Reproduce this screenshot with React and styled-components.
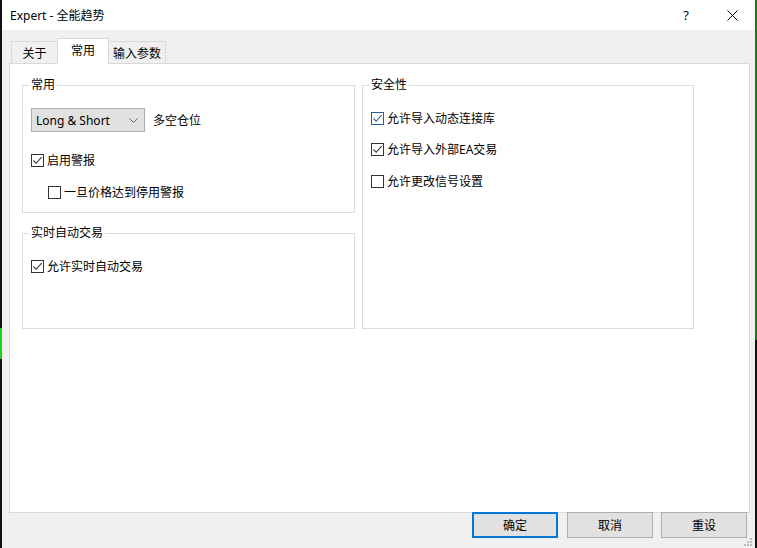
import styled, { createGlobalStyle } from "styled-components";

const GlobalStyle = createGlobalStyle`
  body {
    margin: 0;
    background: #000;
    font-family: "Noto Sans", "Noto Sans CJK SC", sans-serif;
    font-size: 12px;
    color: #000;
  }
`;

const Screen = styled.div`
  display: flex;
  width: 757px;
  height: 548px;
  overflow: hidden;
`;

const Strip = styled.div`
  width: 2px;
  flex: none;
  background: ${(p) => p.$bg};
`;

const Dialog = styled.div`
  width: 753px;
  display: flex;
  flex-direction: column;
  background: #f0f0f0;
`;

const TitleBar = styled.div`
  height: 30px;
  flex: none;
  background: #fff;
  display: flex;
  align-items: center;
  padding-left: 8px;
`;

const Title = styled.div`
  flex: 1;
  font-size: 12px;
`;

const TitleButton = styled.div`
  width: 46px;
  height: 30px;
  display: flex;
  align-items: center;
  justify-content: center;
  font-size: 13px;
`;

const Body = styled.div`
  position: relative;
  flex: 1;
  display: flex;
  flex-direction: column;
  padding: 8px 5px 0 7px;
`;

const TabBar = styled.div`
  height: 25px;
  display: flex;
  align-items: flex-end;
  padding-left: 2px;
`;

const Tab = styled.div`
  position: relative;
  z-index: ${(p) => (p.$active ? 2 : 1)};
  width: ${(p) => p.$w}px;
  height: ${(p) => (p.$active ? 26 : 22)}px;
  margin-left: -1px;
  margin-bottom: ${(p) => (p.$active ? -1 : 0)}px;
  box-sizing: border-box;
  border: 1px solid #d9d9d9;
  border-bottom: none;
  background: ${(p) => (p.$active ? "#fff" : "#f0f0f0")};
  display: flex;
  align-items: ${(p) => (p.$active ? "flex-start" : "center")};
  padding-top: ${(p) => (p.$active ? 2 : 0)}px;
  justify-content: center;
  &:first-child {
    margin-left: 0;
  }
`;

const Panel = styled.div`
  height: 450px;
  box-sizing: border-box;
  border: 1px solid #d9d9d9;
  background: #fff;
  display: grid;
  grid-template-columns: 333px 332px;
  column-gap: 7px;
  align-items: start;
  padding: 13px 0 0 12px;
`;

const Column = styled.div`
  display: flex;
  flex-direction: column;
  gap: 12px;
`;

const Group = styled.fieldset`
  margin: 0;
  min-width: 0;
  height: ${(p) => p.$h}px;
  box-sizing: border-box;
  border: 1px solid #dcdcdc;
  padding: 0 8px;
`;

const Legend = styled.legend`
  padding: 0 2px;
  margin-left: -2px;
  line-height: 16px;
  font-size: 12px;
`;

const Row = styled.div`
  display: flex;
  align-items: center;
  height: ${(p) => p.$h || 20}px;
  margin-top: ${(p) => p.$top}px;
  padding-left: ${(p) => p.$indent || 0}px;
  gap: ${(p) => p.$gap || 3}px;
`;

const Box = styled.span`
  width: 13px;
  height: 13px;
  box-sizing: border-box;
  border: 1px solid ${(p) => (p.$focus ? "#1f5f99" : "#333")};
  background: #fff;
  display: inline-flex;
  align-items: center;
  justify-content: center;
  flex: none;
`;

const Select = styled.div`
  width: 114px;
  height: 24px;
  box-sizing: border-box;
  border: 1px solid #adadad;
  background: #e1e1e1;
  display: flex;
  align-items: center;
  justify-content: space-between;
  padding: 0 6px 0 4px;
  font-size: 12px;
`;

const Footer = styled.div`
  display: flex;
  justify-content: flex-end;
  gap: 8px;
  margin-top: -1px;
  padding-right: 3px;
`;

const Button = styled.div`
  width: 86px;
  height: 26px;
  box-sizing: border-box;
  border: ${(p) => (p.$default ? "2px solid #0078d7" : "1px solid #adadad")};
  margin-right: ${(p) => (p.$default ? 1 : 0)}px;
  background: #e1e1e1;
  display: flex;
  align-items: center;
  justify-content: center;
  font-size: 12px;
  position: relative;
  z-index: 1;
`;

const Grip = styled.svg`
  position: absolute;
  right: 2px;
  bottom: 1px;
`;

const Check = ({ checked, focus, label, top, indent }) => (
  <Row $top={top} $indent={indent}>
    <Box $focus={focus}>
      {checked && (
        <svg width="11" height="11" viewBox="0 0 11 11">
          <polyline
            points="1.5,5.5 4.2,8.3 9.6,2.2"
            fill="none"
            stroke={focus ? "#2a5f8f" : "#333"}
            strokeWidth="1.1"
          />
        </svg>
      )}
    </Box>
    <span>{label}</span>
  </Row>
);

const App = () => {
  return (
    <>
      <GlobalStyle />
      <Screen>
        <Strip $bg="linear-gradient(#111 0 328px, #19d219 328px 359px, #111 359px)" />
        <Dialog>
          <TitleBar>
            <Title>Expert - 全能趋势</Title>
            <TitleButton>?</TitleButton>
            <TitleButton>
              <svg width="11" height="11" viewBox="0 0 11 11">
                <path d="M0.5 0.5 L10.5 10.5 M10.5 0.5 L0.5 10.5" stroke="#000" strokeWidth="1" />
              </svg>
            </TitleButton>
          </TitleBar>
          <Body>
            <TabBar>
              <Tab $w={47}>关于</Tab>
              <Tab $w={52} $active>
                常用
              </Tab>
              <Tab $w={58}>输入参数</Tab>
            </TabBar>
            <Panel>
              <Column>
                <Group $h={136}>
                  <Legend>常用</Legend>
                  <Row $top={15} $h={24} $gap={8}>
                    <Select>
                      <span>Long &amp; Short</span>
                      <svg width="9" height="5" viewBox="0 0 9 5">
                        <polyline points="0.5,0.5 4.5,4.5 8.5,0.5" fill="none" stroke="#555" strokeWidth="0.9" />
                      </svg>
                    </Select>
                    <span>多空仓位</span>
                  </Row>
                  <Check checked label="启用警报" top={18} />
                  <Check label="一旦价格达到停用警报" top={12} indent={17} />
                </Group>
                <Group $h={104}>
                  <Legend>实时自动交易</Legend>
                  <Check checked label="允许实时自动交易" top={15} />
                </Group>
              </Column>
              <Group $h={252}>
                <Legend>安全性</Legend>
                <Check checked focus label="允许导入动态连接库" top={15} />
                <Check checked label="允许导入外部EA交易" top={11} />
                <Check label="允许更改信号设置" top={12} />
              </Group>
            </Panel>
            <Footer>
              <Button $default>确定</Button>
              <Button>取消</Button>
              <Button>重设</Button>
            </Footer>
            <Grip width="9" height="9" viewBox="0 0 9 9">
              {[
                [6, 0],
                [3, 3],
                [6, 3],
                [0, 6],
                [3, 6],
                [6, 6],
              ].map(([x, y]) => (
                <rect key={`${x}-${y}`} x={x} y={y} width="2" height="2" fill="#bcbcbc" />
              ))}
            </Grip>
          </Body>
        </Dialog>
        <Strip $bg="linear-gradient(#1a7a1a 0 340px, #111 340px)" />
      </Screen>
    </>
  );
};

export default App;
